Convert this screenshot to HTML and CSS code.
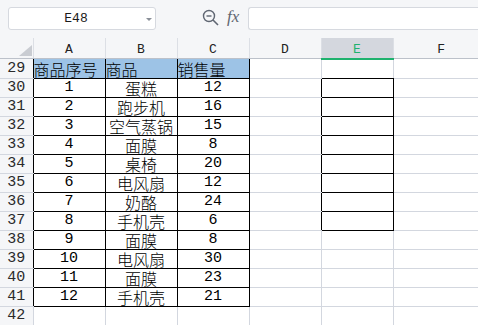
FILE: index.html
```html
<!DOCTYPE html>
<html lang="zh">
<head>
<meta charset="utf-8">
<link rel="stylesheet" href="styles.css">
</head>
<body>
<div class="bar">
  <div class="namebox"><span class="ref">E48</span><span class="caret"></span></div>
  <svg class="zoom" width="18" height="18" viewBox="0 0 18 18"><circle cx="7" cy="7" r="5.5" fill="none" stroke="#5f6672" stroke-width="1.4"/><line x1="4.5" y1="7" x2="9.5" y2="7" stroke="#5f6672" stroke-width="1.4"/><line x1="11" y1="11" x2="16" y2="16" stroke="#5f6672" stroke-width="1.6"/></svg>
  <span class="fx">fx</span>
  <div class="formula"></div>
</div>
<table class="sheet">
  <colgroup><col class="c0"><col class="cw"><col class="cw"><col class="cw"><col class="cw"><col class="cw"><col class="cf"></colgroup>
  <tr class="hdr"><th class="corner"><svg width="13" height="11" viewBox="0 0 13 11"><polygon points="13,0 13,11 0,11" fill="#c9ccd2"/></svg></th><th>A</th><th>B</th><th>C</th><th>D</th><th class="sel">E</th><th class="last">F</th></tr>
  <tr><td class="rh k">29</td><td class="d blue l">商品序号</td><td class="d blue l">商品</td><td class="d blue l">销售量</td><td></td><td class="tb"></td><td></td></tr>
  <tr><td class="rh k">30</td><td class="d n">1</td><td class="d">蛋糕</td><td class="d n">12</td><td class="kr"></td><td class="d"></td><td></td></tr>
  <tr><td class="rh k">31</td><td class="d n">2</td><td class="d">跑步机</td><td class="d n">16</td><td class="kr"></td><td class="d"></td><td></td></tr>
  <tr><td class="rh k">32</td><td class="d n">3</td><td class="d">空气蒸锅</td><td class="d n">15</td><td class="kr"></td><td class="d"></td><td></td></tr>
  <tr><td class="rh k">33</td><td class="d n">4</td><td class="d">面膜</td><td class="d n">8</td><td class="kr"></td><td class="d"></td><td></td></tr>
  <tr><td class="rh k">34</td><td class="d n">5</td><td class="d">桌椅</td><td class="d n">20</td><td class="kr"></td><td class="d"></td><td></td></tr>
  <tr><td class="rh k">35</td><td class="d n">6</td><td class="d">电风扇</td><td class="d n">12</td><td class="kr"></td><td class="d"></td><td></td></tr>
  <tr><td class="rh k">36</td><td class="d n">7</td><td class="d">奶酪</td><td class="d n">24</td><td class="kr"></td><td class="d"></td><td></td></tr>
  <tr><td class="rh k">37</td><td class="d n">8</td><td class="d">手机壳</td><td class="d n">6</td><td class="kr"></td><td class="d"></td><td></td></tr>
  <tr><td class="rh k">38</td><td class="d n">9</td><td class="d">面膜</td><td class="d n">8</td><td></td><td></td><td></td></tr>
  <tr><td class="rh k">39</td><td class="d n">10</td><td class="d">电风扇</td><td class="d n">30</td><td></td><td></td><td></td></tr>
  <tr><td class="rh k">40</td><td class="d n">11</td><td class="d">面膜</td><td class="d n">23</td><td></td><td></td><td></td></tr>
  <tr><td class="rh k">41</td><td class="d n">12</td><td class="d">手机壳</td><td class="d n">21</td><td></td><td></td><td></td></tr>
  <tr><td class="rh">42</td><td></td><td></td><td></td><td></td><td></td><td></td></tr>
</table>
</body>
</html>
```
FILE: styles.css
```css
html, body {
  margin: 0;
  padding: 0;
  background: #f5f6f8;
  overflow: hidden;
  width: 478px;
  height: 325px;
}
.bar {
  display: flex;
  align-items: flex-start;
  height: 38px;
  padding: 7px 0 8px 8px;
  box-sizing: border-box;
}
.namebox {
  width: 148px;
  height: 23px;
  box-sizing: border-box;
  background: #fff;
  border: 1px solid #d6d9df;
  border-radius: 3px;
  position: relative;
  display: flex;
  align-items: center;
  justify-content: center;
}
.ref {
  font-family: "Liberation Mono", monospace;
  font-size: 13px;
  color: #1a1a1a;
  margin-right: 12px;
}
.caret {
  position: absolute;
  right: 3px;
  top: 10px;
  width: 0;
  height: 0;
  border-left: 3px solid transparent;
  border-right: 3px solid transparent;
  border-top: 3px solid #8a8f98;
}
.zoom {
  margin-left: 46px;
  margin-top: 2px;
}
.fx {
  font-family: "Liberation Serif", serif;
  font-style: italic;
  font-size: 17px;
  color: #5f6672;
  margin-left: 7px;
  line-height: 20px;
}
.formula {
  margin-left: 9px;
  flex: 1;
  height: 23px;
  box-sizing: border-box;
  background: #fff;
  border: 1px solid #d6d9df;
  border-right: none;
  border-radius: 3px 0 0 3px;
}
.sheet {
  border-collapse: collapse;
  table-layout: fixed;
  width: 489px;
  background: #fff;
}
.c0 { width: 33px; }
.cw { width: 72px; }
.cf { width: 96px; }
.sheet tr { height: 19px; }
.sheet td {
  padding: 0;
  border: 1px solid #d3d7df;
  height: 18px;
  text-align: center;
  vertical-align: bottom;
  font-family: "Noto Sans CJK SC", sans-serif;
  font-weight: 300;
  font-size: 16px;
  line-height: 18px;
  color: #000;
  white-space: nowrap;
}
.sheet tr:first-child + tr td { border-top-color: #bcc1ca; }
.hdr { height: 19px; }
.hdr th {
  background: #f5f6f8;
  font-family: "Liberation Mono", monospace;
  font-weight: normal;
  font-size: 13px;
  color: #222;
  padding: 0;
  height: 18px;
  border: none;
  border-bottom: 1px solid #bcc1ca;
  border-right: 1px solid #dcdfe5;
  vertical-align: bottom;
  line-height: 16px;
}
.hdr th.corner {
  text-align: right;
  vertical-align: bottom;
  line-height: 0;
  padding: 0 1px 2px 0;
}
.hdr th.sel {
  background: #d4d7de;
  color: #1fb26e;
  border-bottom: 2px solid #1fb26e;
}
.hdr th.last { border-right: none; }
.sheet td.rh {
  background: #f5f6f8;
  font-family: "Liberation Mono", monospace;
  font-weight: normal;
  font-size: 15px;
  color: #2a2a2a;
  border-left: none;
  border-right-color: #d3d7df;
}
.sheet td.rh.k { border-right-color: #000; }
.sheet td.d { border-color: #000; }
.sheet td.n {
  font-family: "Liberation Mono", monospace;
  font-weight: normal;
  font-size: 15px;
}
.sheet td.blue { background: #9dc3e6; }
.sheet td.l { text-align: left; }
.sheet td.kr { border-right-color: #000; }
.sheet td.tb { border-bottom-color: #000; }
```
